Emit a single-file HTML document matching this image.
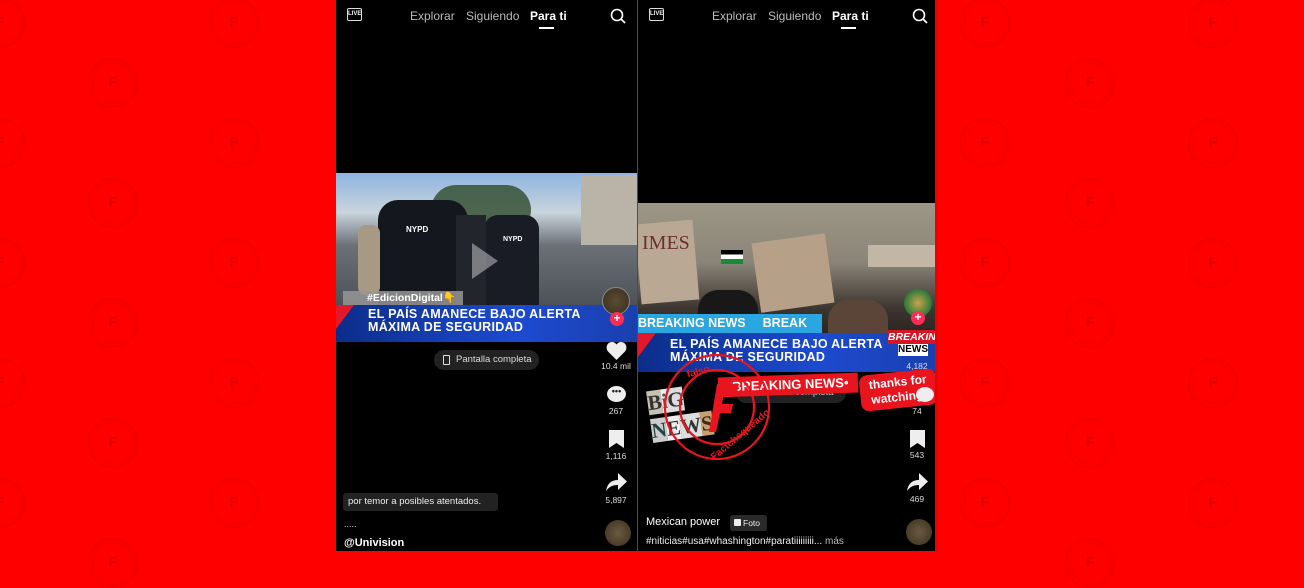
<!DOCTYPE html>
<html><head><meta charset="utf-8"><style>
*{margin:0;padding:0;box-sizing:border-box}
body{width:1304px;height:551px;background:#ff0000;position:relative;overflow:hidden;font-family:"Liberation Sans",Arial,sans-serif}
.a{position:absolute}
.ph{position:absolute;top:0;height:551px;background:#000;overflow:hidden}
.tab{position:absolute;top:9px;font-size:12px;color:#bbb}
.cnt{position:absolute;width:40px;text-align:center;font-size:8.5px;color:#ddd}
.ban{position:absolute;background:linear-gradient(90deg,#0b2d8a,#1d4bd0 60%,#1a3fae);color:#fff;font-weight:bold;font-size:12.5px;line-height:13px;letter-spacing:.3px}
.wm{position:absolute;width:50px;height:50px;border-radius:50%;border:1px solid rgba(160,0,0,.18);box-shadow:0 0 0 6px rgba(200,0,0,.05) inset;color:rgba(160,0,0,.3);font-weight:bold;font-size:15px;text-align:center;line-height:48px}
</style></head><body>
<div class="wm" style="left:-25px;top:-2px">F</div><div class="wm" style="left:88px;top:58px">F</div><div class="wm" style="left:209px;top:-2px">F</div>
<div class="wm" style="left:-25px;top:118px">F</div><div class="wm" style="left:209px;top:118px">F</div><div class="wm" style="left:88px;top:178px">F</div>
<div class="wm" style="left:-25px;top:238px">F</div><div class="wm" style="left:209px;top:238px">F</div><div class="wm" style="left:88px;top:298px">F</div>
<div class="wm" style="left:-25px;top:358px">F</div><div class="wm" style="left:209px;top:358px">F</div><div class="wm" style="left:88px;top:418px">F</div>
<div class="wm" style="left:-25px;top:478px">F</div><div class="wm" style="left:209px;top:478px">F</div><div class="wm" style="left:88px;top:538px">F</div>
<div class="wm" style="left:1065px;top:58px">F</div><div class="wm" style="left:1188px;top:-2px">F</div><div class="wm" style="left:960px;top:-2px">F</div>
<div class="wm" style="left:1065px;top:178px">F</div><div class="wm" style="left:1188px;top:118px">F</div><div class="wm" style="left:960px;top:118px">F</div>
<div class="wm" style="left:1065px;top:298px">F</div><div class="wm" style="left:1188px;top:238px">F</div><div class="wm" style="left:960px;top:238px">F</div>
<div class="wm" style="left:1065px;top:418px">F</div><div class="wm" style="left:1188px;top:358px">F</div><div class="wm" style="left:960px;top:358px">F</div>
<div class="wm" style="left:1065px;top:538px">F</div><div class="wm" style="left:1188px;top:478px">F</div><div class="wm" style="left:960px;top:478px">F</div>

<div class="ph" style="left:336px;width:301px">
 <div class="a" style="left:11px;top:8px;width:15px;height:13px;border:1.3px solid #ddd;border-radius:2px;font-size:6px;color:#eee;font-weight:bold;text-align:center;line-height:11px">LIVE</div>
 <div class="tab" style="left:74px">Explorar</div><div class="tab" style="left:130px">Siguiendo</div>
 <div class="tab" style="left:194px;color:#fff;font-weight:bold">Para ti</div>
 <div class="a" style="left:203px;top:27px;width:15px;height:2px;background:#fff"></div>
 <svg class="a" style="left:274px;top:8px" width="16" height="16"><circle cx="7" cy="7" r="5.5" stroke="#fff" stroke-width="1.6" fill="none"/><path d="M11 11l4 4" stroke="#fff" stroke-width="1.8"/></svg>
 <div class="a" style="left:0;top:173px;width:301px;height:132px;background:linear-gradient(180deg,#8fb4e0 0%,#c9d4dc 30%,#6b7077 55%,#4d5258 100%)"></div>
 <div class="a" style="left:95px;top:185px;width:100px;height:50px;background:#2e4a2a;border-radius:40px;opacity:.8"></div>
 <div class="a" style="left:245px;top:175px;width:56px;height:70px;background:#b9b3a8"></div>
 <div class="a" style="left:42px;top:200px;width:90px;height:105px;background:#15171f;border-radius:20px 20px 0 0"></div>
 <div class="a" style="left:148px;top:215px;width:55px;height:90px;background:#1a1c25;border-radius:14px 14px 0 0"></div>
 <div class="a" style="left:120px;top:215px;width:30px;height:90px;background:#23252c"></div>
 <div class="a" style="left:22px;top:225px;width:22px;height:70px;background:#a89985;border-radius:8px"></div>
 <div class="a" style="left:70px;top:225px;color:#fff;font-size:8px;font-weight:bold">NYPD</div>
 <div class="a" style="left:167px;top:236px;color:#fff;font-size:7px;font-weight:bold">NYPD</div>
 <div class="a" style="left:136px;top:243px;width:0;height:0;border-left:26px solid rgba(255,255,255,.4);border-top:18px solid transparent;border-bottom:18px solid transparent"></div>
 <div class="a" style="left:7px;top:291px;width:120px;height:14px;background:rgba(150,150,150,.85);color:#fff;font-weight:bold;font-size:10.5px;line-height:14px;padding-left:24px">#EdicionDigital<span style="color:#f5c400">👇</span></div>
 <div class="ban" style="left:0;top:305px;width:301px;height:37px;padding:3px 0 0 32px">EL PAÍS AMANECE BAJO ALERTA<br>MÁXIMA DE SEGURIDAD</div>
 <div class="a" style="left:0;top:305px;width:0;height:0;border-top:24px solid #e1192a;border-right:18px solid transparent"></div>
 <div class="a" style="left:98px;top:350px;width:105px;height:20px;border-radius:10px;background:#222;color:#ddd;font-size:9.5px;line-height:20px;padding-left:22px">Pantalla completa</div>
 <div class="a" style="left:107px;top:355px;width:7px;height:10px;border:1.2px solid #ddd;border-radius:1px"></div>
 <div class="a" style="left:266px;top:287px;width:28px;height:28px;border-radius:50%;background:radial-gradient(#5a4a30,#3a2f20);border:1px solid #888"></div>
 <div class="a" style="left:274px;top:312px;width:14px;height:14px;border-radius:50%;background:#fe2c55;color:#fff;font-size:12px;line-height:13px;text-align:center;font-weight:bold">+</div>
 <svg class="a" style="left:270px;top:341px" width="21" height="19"><path d="M10.5 19L2 10.5C-1 7 1 1 6 1c2 0 3.5 1 4.5 2.5C11.5 2 13 1 15 1c5 0 7 6 4 9.5z" fill="#eee"/></svg>
 <div class="cnt" style="left:260px;top:361px">10.4 mil</div>
 <div class="a" style="left:271px;top:386px;width:19px;height:16px;border-radius:50%;background:#eee;color:#222;font-size:9px;line-height:10px;text-align:center;font-weight:bold">•••</div>
 <div class="cnt" style="left:260px;top:406px">267</div>
 <svg class="a" style="left:273px;top:430px" width="15" height="18"><path d="M0 0h15v18l-7.5-5L0 18z" fill="#eee"/></svg>
 <div class="cnt" style="left:260px;top:451px">1,116</div>
 <svg class="a" style="left:270px;top:473px" width="21" height="19"><path d="M12 0l9 8.5-9 8.5v-5c-6 0-9 2-12 6 1-7 5-11 12-11z" fill="#eee"/></svg>
 <div class="cnt" style="left:260px;top:495px">5,897</div>
 <div class="a" style="left:7px;top:493px;width:155px;height:18px;border-radius:3px;background:#222;color:#eee;font-size:9.5px;line-height:18px;padding-left:5px">por temor a posibles atentados.</div>
 <div class="a" style="left:8px;top:519px;color:#ddd;font-size:9px">.....</div>
 <div class="a" style="left:8px;top:537px;color:#fff;font-size:11px;font-weight:bold">@Univision</div>
 <div class="a" style="left:269px;top:520px;width:26px;height:26px;border-radius:50%;background:radial-gradient(#6a5a40,#3a3020)"></div>
</div>

<div class="ph" style="left:638px;width:300px">
 <div class="a" style="left:11px;top:8px;width:15px;height:13px;border:1.3px solid #ddd;border-radius:2px;font-size:6px;color:#eee;font-weight:bold;text-align:center;line-height:11px">LIVE</div>
 <div class="tab" style="left:74px">Explorar</div><div class="tab" style="left:130px">Siguiendo</div>
 <div class="tab" style="left:194px;color:#fff;font-weight:bold">Para ti</div>
 <div class="a" style="left:203px;top:27px;width:15px;height:2px;background:#fff"></div>
 <svg class="a" style="left:274px;top:8px" width="16" height="16"><circle cx="7" cy="7" r="5.5" stroke="#fff" stroke-width="1.6" fill="none"/><path d="M11 11l4 4" stroke="#fff" stroke-width="1.8"/></svg>
 <div class="a" style="left:0;top:203px;width:300px;height:132px;background:linear-gradient(180deg,#9e9787 0%,#8a8578 45%,#3c3530 80%,#2a2420 100%)"></div>
 <div class="a" style="left:0;top:222px;width:58px;height:80px;background:#b9a893;transform:rotate(-5deg)"></div>
 <div class="a" style="left:4px;top:232px;color:#6b3030;font-size:20px;font-family:'Liberation Serif',serif">IMES</div>
 <div class="a" style="left:118px;top:238px;width:74px;height:70px;background:#b6a088;transform:rotate(-8deg)"></div>
 <div class="a" style="left:230px;top:245px;width:70px;height:22px;background:#c2b6a6"></div>
 <div class="a" style="left:83px;top:250px;width:22px;height:14px;background:linear-gradient(#000 33%,#fff 33% 66%,#1a8a3a 66%)"></div>
 <div class="a" style="left:60px;top:290px;width:60px;height:45px;background:#181818;border-radius:20px 20px 0 0"></div>
 <div class="a" style="left:190px;top:300px;width:60px;height:35px;background:#5a4538;border-radius:20px 20px 0 0"></div>
 <div class="a" style="left:0;top:314px;width:184px;height:19px;background:#2aa7e0;color:#fff;font-weight:bold;font-size:12.5px;line-height:19px">BREAKING NEWS<span style="margin-left:17px">BREAK</span></div>
 <div class="ban" style="left:0;top:333px;width:300px;height:39px;padding:5px 0 0 32px">EL PAÍS AMANECE BAJO ALERTA<br>MÁXIMA DE SEGURIDAD</div>
 <div class="a" style="left:0;top:333px;width:0;height:0;border-top:24px solid #e1192a;border-right:18px solid transparent"></div>
 <div class="a" style="left:266px;top:289px;width:28px;height:28px;border-radius:50%;background:radial-gradient(#c9a24a,#2a7a3a 70%,#d33 100%)"></div>
 <div class="a" style="left:273px;top:311px;width:14px;height:14px;border-radius:50%;background:#fe2c55;color:#fff;font-size:12px;line-height:13px;text-align:center;font-weight:bold">+</div>
 <div class="a" style="left:250px;top:330px;width:50px;height:14px;background:#d51525;color:#fff;font-weight:bold;font-style:italic;font-size:10.5px;line-height:14px;text-align:center">BREAKING</div>
 <div class="a" style="left:260px;top:344px;width:30px;height:12px;background:#fff;color:#000;font-weight:bold;font-size:10px;line-height:12px;text-align:center">NEWS</div>
 <div class="cnt" style="left:259px;top:361px">4,182</div>
 <div class="a" style="left:98px;top:383px;width:110px;height:20px;border-radius:10px;background:#222;color:#ccc;font-size:9.5px;line-height:20px;padding-left:22px">Pantalla completa</div>
 <div class="cnt" style="left:259px;top:406px">74</div>
 <svg class="a" style="left:272px;top:430px" width="15" height="18"><path d="M0 0h15v18l-7.5-5L0 18z" fill="#eee"/></svg>
 <div class="cnt" style="left:259px;top:450px">543</div>
 <svg class="a" style="left:269px;top:473px" width="21" height="19"><path d="M12 0l9 8.5-9 8.5v-5c-6 0-9 2-12 6 1-7 5-11 12-11z" fill="#eee"/></svg>
 <div class="cnt" style="left:259px;top:494px">469</div>
 <div class="a" style="left:8px;top:516px;color:#fff;font-size:11px">Mexican power</div>
 <div class="a" style="left:92px;top:515px;width:37px;height:16px;border-radius:3px;background:#2a2a2a;color:#eee;font-size:8.5px;line-height:16px;padding-left:13px">Foto</div>
 <div class="a" style="left:96px;top:519px;width:7px;height:7px;background:#eee;border-radius:1px"></div>
 <div class="a" style="left:8px;top:536px;color:#eee;font-size:10px">#niticias#usa#whashington#paratiiiiiiiii... <span style="color:#bbb">más</span></div>
 <div class="a" style="left:268px;top:519px;width:26px;height:26px;border-radius:50%;background:radial-gradient(#6a5a40,#3a3020)"></div>
 <div class="a" style="left:12px;top:385px;width:60px;height:65px;color:#ddd;font-family:'Liberation Serif',serif;font-weight:bold;font-size:21px;line-height:28px;transform:rotate(-8deg)"><span style="background:#c8c0b0;color:#333">B</span><span style="background:#eee;color:#555">i</span><span style="background:#ddd;color:#333">G</span><br><span style="background:#ccc;color:#244">N</span><span style="background:#eee;color:#333">E</span><span style="background:#ddd;color:#333">W</span><span style="background:#c9a070;color:#3a2a1a">S</span></div>
 <div class="a" style="left:80px;top:375px;width:140px;height:20px;background:#e8141e;color:#fff;font-weight:bold;font-size:13px;line-height:20px;text-align:center;transform:rotate(-2deg)">•BREAKING NEWS•</div>
 <div class="a" style="left:222px;top:372px;width:77px;height:36px;background:#e8141e;border-radius:8px;color:#fff;font-weight:bold;font-size:12px;line-height:15px;text-align:center;padding-top:3px;transform:rotate(-6deg)">thanks for<br>watching!</div>
 <div class="a" style="left:278px;top:387px;width:18px;height:15px;border-radius:50%;background:#eee"></div>
 <svg class="a" style="left:25px;top:350px" width="110" height="112">
  <circle cx="54" cy="57" r="52" stroke="#e8141e" stroke-width="2.2" fill="none"/>
  <circle cx="54" cy="57" r="37" stroke="#e8141e" stroke-width="2.2" fill="none"/>
  <path d="M46 82l8-48h22l-2 9h-13l-2 11h11l-2 9h-11l-4 19z" fill="#e8141e"/>
  <text x="24" y="26" fill="#e8141e" font-size="10" font-weight="bold" font-family="Liberation Sans" transform="rotate(-15 30 24)">falso</text>
  <text x="40" y="100" fill="#e8141e" font-size="10" font-weight="bold" font-family="Liberation Sans" transform="rotate(-40 60 90)">Factchequeado</text>
 </svg>
 <div class="a" style="left:297px;top:0;width:3px;height:551px;background:#e00"></div>
</div>
</body></html>
